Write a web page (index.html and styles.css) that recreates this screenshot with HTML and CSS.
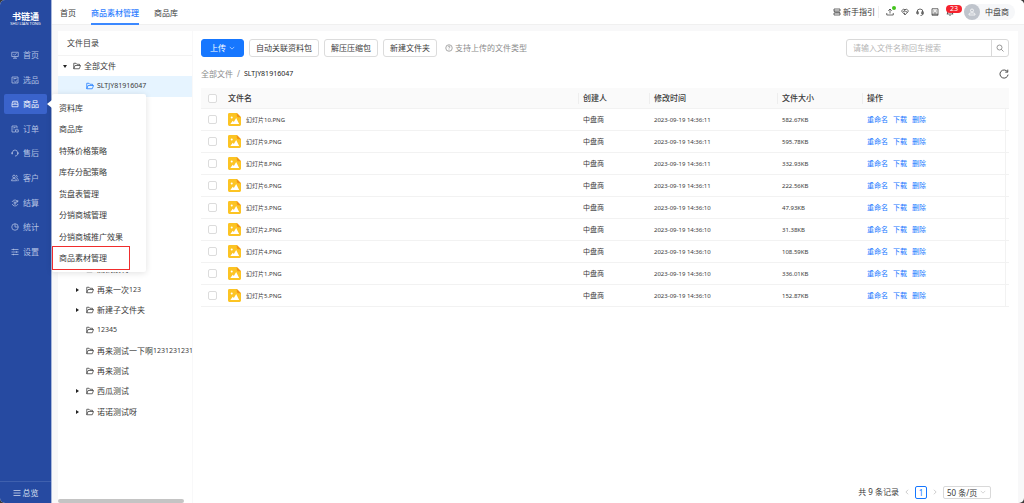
FILE: index.html
```html
<!DOCTYPE html>
<html lang="zh-CN">
<head>
<meta charset="utf-8">
<title>商品素材管理</title>
<link rel="stylesheet" href="styles.css">
</head>
<body>
<svg class="defs" aria-hidden="true">
  <symbol id="folder" viewBox="0 0 16 16"><path d="M1.5 13.5v-11h4.6l1.6 2h5.3v2.5M1.5 13.5l2.6-6.5h11l-2.6 6.5z"/></symbol>
  <symbol id="image" viewBox="0 0 14 14"><path d="M1.5 0H9.500l4.500 4.500v8a1.500 1.500 0 0 1-1.500 1.500h-11a1.500 1.500 0 0 1-1.500-1.500v-11a1.500 1.500 0 0 1 1.500-1.500z" fill="#fcc424"/><path d="M9.500 0l4.500 4.500h-3a1.500 1.500 0 0 1-1.500-1.500z" fill="#f39517"/><circle cx="4" cy="4.800" r="1.100" fill="#fff"/><path d="M2.500 11.800l2.600-3.500 1.200 1.300 2.500-4.300 3.200 6.500z" fill="#fff"/></symbol>
  <symbol id="down" viewBox="0 0 16 16"><path d="M2 5l6 6 6-6"/></symbol>
</svg>
<div class="app">
  <aside class="side">
    <div class="logo"><strong>书链通</strong><small>SHU LIAN TONG</small></div>
    <nav class="side-nav">
      <a href="#"><svg viewBox="0 0 16 16"><path d="M1.500 2.500h13v8.500h-13zM4 14.500h8M8 11v3M5 6.500l2 2 4-4"/></svg>首页</a>
      <a href="#"><svg viewBox="0 0 16 16"><path d="M2 2h12v12H2zM5 5h6M5 8h2M7 11l2 1.500 3-4"/></svg>选品</a>
      <a href="#" class="active"><svg viewBox="0 0 16 16"><path d="M3.500 2.500h9l1.500 5v6H2v-6zM2 8.500h12M5.500 5c.5 2 4.500 2 5 0"/></svg>商品</a>
      <a href="#"><svg viewBox="0 0 16 16"><path d="M8 14H2V2h10v5M5 5h4M5 8h2M9 9.500h5.500V14H9z"/></svg>订单</a>
      <a href="#"><svg viewBox="0 0 16 16"><path d="M3 10V7a5 5 0 0 1 10 0v3c0 3-2 4-5 4M3 7H1.500v3H3M13 7h1.500v3H13"/></svg>售后</a>
      <a href="#"><svg viewBox="0 0 16 16"><circle cx="6" cy="5" r="2.700"/><path d="M1 13.500c0-6 10-6 10 0zM10 2.500c3 0 3 4.500 1 5 2 .5 3.500 3 3.500 6H13"/></svg>客户</a>
      <a href="#"><svg viewBox="0 0 16 16"><path d="M13.500 6A6 6 0 0 0 3 4.500L2 6M2.500 10A6 6 0 0 0 13 11.500l1-1.500M5.500 4.500L8 7.500l2.500-3M5 8h6M8 7.500V12M13.500 2v4H10"/></svg>结算</a>
      <a href="#"><svg viewBox="0 0 16 16"><circle cx="8" cy="8" r="6.500"/><path d="M8 1.500V8h6.500"/></svg>统计</a>
      <a href="#"><svg viewBox="0 0 16 16"><path d="M1 3h14M1 8h14M1 13h14M5 1.500v3M11 6.500v3M5 11.500v3"/></svg>设置</a>
    </nav>
    <a href="#" class="overview"><svg viewBox="0 0 16 16"><path d="M1 3h14M1 8h14M1 13h14"/></svg>总览</a>
  </aside>

  <div class="flyout">
    <a href="#">资料库</a>
    <a href="#">商品库</a>
    <a href="#">特殊价格策略</a>
    <a href="#">库存分配策略</a>
    <a href="#">货盘表管理</a>
    <a href="#">分销商城管理</a>
    <a href="#">分销商城推广效果</a>
    <a href="#" class="marked">商品素材管理</a>
  </div>

  <div class="main">
    <header class="top">
      <nav class="tabs">
        <a href="#">首页</a>
        <a href="#" class="current">商品素材管理</a>
        <a href="#">商品库</a>
      </nav>
      <div class="tools">
        <a href="#" class="guide"><svg viewBox="0 0 16 16"><path d="M2 2h12v4H2zM2 6c0 5 12 0 12 4v4H2v-4h12"/></svg>新手指引</a>
        <button class="tool dot" aria-label="上传"><svg viewBox="0 0 16 16"><path d="M1.500 10v4h13v-4M8 11V2M4.500 5.500L8 2l3.500 3.500"/></svg></button>
        <button class="tool" aria-label="合作"><svg viewBox="0 0 16 16"><path d="M1 6l4-4 3 1.500L11 2l4 4-7 8zM8 3.500L5 7l2 1 2-2 4 3M6 10l2 2"/></svg></button>
        <button class="tool" aria-label="客服"><svg viewBox="0 0 16 16"><path d="M2 11V8a6 6 0 0 1 12 0v3c0 3-2 4-5 4M2 7.500h2.500v4.500H2zM11.500 7.500H14v4.500h-2.500z"/></svg></button>
        <button class="tool" aria-label="帮助"><svg viewBox="0 0 16 16"><path d="M2 1.500h12v13H2zM5.500 5v2M10.500 5v2M5 10h6M2 12.500h12"/></svg></button>
        <button class="tool bell" aria-label="消息"><svg viewBox="0 0 16 16"><path d="M3 12V7a5 5 0 0 1 10 0v5M1.500 12h13M6.500 14.500h3"/></svg><span class="badge">23</span></button>
        <a href="#" class="user"><span class="avatar"><svg viewBox="0 0 16 16"><circle cx="8" cy="5" r="3"/><path d="M2 14v-2c0-3 12-3 12 0v2z"/></svg></span>中盘商</a>
      </div>
    </header>

    <div class="body">
      <section class="dirs">
        <h2>文件目录</h2>
        <ul class="tree">
          <li class="root"><i class="arrow open"></i><svg><use href="#folder"/></svg>全部文件</li>
          <li class="selected"><i class="arrow none"></i><svg><use href="#folder"/></svg><span class="latin">SLTJY81916047</span></li>
          <li class="gap" aria-hidden="true"></li>
          <li><i class="arrow none"></i><svg><use href="#folder"/></svg>测试素材</li>
          <li><i class="arrow"></i><svg><use href="#folder"/></svg>再来一次<span class="latin">123</span></li>
          <li><i class="arrow"></i><svg><use href="#folder"/></svg>新建子文件夹</li>
          <li><i class="arrow none"></i><svg><use href="#folder"/></svg><span class="latin">12345</span></li>
          <li><i class="arrow none"></i><svg><use href="#folder"/></svg>再来测试一下啊<span class="latin">12312312312</span></li>
          <li><i class="arrow none"></i><svg><use href="#folder"/></svg>再来测试</li>
          <li><i class="arrow"></i><svg><use href="#folder"/></svg>西瓜测试</li>
          <li><i class="arrow"></i><svg><use href="#folder"/></svg>诺诺测试呀</li>
        </ul>
        <div class="hbar"></div>
      </section>

      <section class="files">
        <div class="actions">
          <button class="btn primary">上传<svg><use href="#down"/></svg></button>
          <button class="btn">自动关联资料包</button>
          <button class="btn">解压压缩包</button>
          <button class="btn">新建文件夹</button>
          <span class="hint"><svg viewBox="0 0 16 16"><circle cx="8" cy="8" r="6.500"/><path d="M6 6.500c0-3 4-3 4-.5 0 1.500-2 1.500-2 3M8 11v1.300"/></svg>支持上传的文件类型</span>
          <form class="search">
            <input type="text" placeholder="请输入文件名称回车搜索" aria-label="搜索文件">
            <button type="button" aria-label="搜索"><svg viewBox="0 0 16 16"><circle cx="7" cy="7" r="5"/><path d="M10.500 10.500L15 15"/></svg></button>
          </form>
        </div>
        <div class="crumbs">
          <a href="#">全部文件</a><span>/</span><b class="latin">SLTJY81916047</b>
          <button class="reload" aria-label="刷新"><svg viewBox="0 0 16 16"><path d="M13.500 4.500A6.500 6.500 0 1 0 14.500 9M14 1v4h-4"/></svg></button>
        </div>
        <table>
          <colgroup><col class="c-check"><col><col class="c-owner"><col class="c-time"><col class="c-size"><col class="c-ops"></colgroup>
          <thead><tr><th><input type="checkbox" aria-label="全选"></th><th>文件名</th><th class="split">创建人</th><th class="split">修改时间</th><th class="split">文件大小</th><th class="split">操作</th></tr></thead>
          <tbody>
            <tr><td><input type="checkbox" aria-label="幻灯片10"></td><td><div class="file"><svg><use href="#image"/></svg>幻灯片10.PNG</div></td><td>中盘商</td><td class="num">2023-09-19 14:36:11</td><td class="num">582.67KB</td><td class="ops"><a href="#">重命名</a><a href="#">下载</a><a href="#">删除</a></td></tr>
            <tr><td><input type="checkbox" aria-label="幻灯片9"></td><td><div class="file"><svg><use href="#image"/></svg>幻灯片9.PNG</div></td><td>中盘商</td><td class="num">2023-09-19 14:36:11</td><td class="num">595.78KB</td><td class="ops"><a href="#">重命名</a><a href="#">下载</a><a href="#">删除</a></td></tr>
            <tr><td><input type="checkbox" aria-label="幻灯片8"></td><td><div class="file"><svg><use href="#image"/></svg>幻灯片8.PNG</div></td><td>中盘商</td><td class="num">2023-09-19 14:36:11</td><td class="num">332.93KB</td><td class="ops"><a href="#">重命名</a><a href="#">下载</a><a href="#">删除</a></td></tr>
            <tr><td><input type="checkbox" aria-label="幻灯片6"></td><td><div class="file"><svg><use href="#image"/></svg>幻灯片6.PNG</div></td><td>中盘商</td><td class="num">2023-09-19 14:36:11</td><td class="num">222.56KB</td><td class="ops"><a href="#">重命名</a><a href="#">下载</a><a href="#">删除</a></td></tr>
            <tr><td><input type="checkbox" aria-label="幻灯片3"></td><td><div class="file"><svg><use href="#image"/></svg>幻灯片3.PNG</div></td><td>中盘商</td><td class="num">2023-09-19 14:36:10</td><td class="num">47.93KB</td><td class="ops"><a href="#">重命名</a><a href="#">下载</a><a href="#">删除</a></td></tr>
            <tr><td><input type="checkbox" aria-label="幻灯片2"></td><td><div class="file"><svg><use href="#image"/></svg>幻灯片2.PNG</div></td><td>中盘商</td><td class="num">2023-09-19 14:36:10</td><td class="num">31.38KB</td><td class="ops"><a href="#">重命名</a><a href="#">下载</a><a href="#">删除</a></td></tr>
            <tr><td><input type="checkbox" aria-label="幻灯片4"></td><td><div class="file"><svg><use href="#image"/></svg>幻灯片4.PNG</div></td><td>中盘商</td><td class="num">2023-09-19 14:36:10</td><td class="num">108.59KB</td><td class="ops"><a href="#">重命名</a><a href="#">下载</a><a href="#">删除</a></td></tr>
            <tr><td><input type="checkbox" aria-label="幻灯片1"></td><td><div class="file"><svg><use href="#image"/></svg>幻灯片1.PNG</div></td><td>中盘商</td><td class="num">2023-09-19 14:36:10</td><td class="num">336.01KB</td><td class="ops"><a href="#">重命名</a><a href="#">下载</a><a href="#">删除</a></td></tr>
            <tr><td><input type="checkbox" aria-label="幻灯片5"></td><td><div class="file"><svg><use href="#image"/></svg>幻灯片5.PNG</div></td><td>中盘商</td><td class="num">2023-09-19 14:36:10</td><td class="num">152.87KB</td><td class="ops"><a href="#">重命名</a><a href="#">下载</a><a href="#">删除</a></td></tr>
          </tbody>
        </table>
        <footer class="pager">
          <span>共 9 条记录</span>
          <button class="step" aria-label="上一页"><svg viewBox="0 0 16 16"><path d="M11 2L5 8l6 6"/></svg></button>
          <button class="page">1</button>
          <button class="step" aria-label="下一页"><svg viewBox="0 0 16 16"><path d="M5 2l6 6-6 6"/></svg></button>
          <label class="size"><select aria-label="每页条数"><option>50 条/页</option></select><svg><use href="#down"/></svg></label>
        </footer>
      </section>
    </div>
  </div>
</div>
</body>
</html>
```
FILE: styles.css
```css
* { box-sizing: border-box; }
body {
  margin: 0;
  background: #3a3a3a;
  color: #3a3a3a;
  font: 8px/12px "Noto Sans", "Noto Sans CJK SC", sans-serif;
}
a { color: inherit; text-decoration: none; }
button, input, select { font: inherit; color: inherit; margin: 0; padding: 0; }
button { border: 0; background: none; }
svg { width: 8px; height: 8px; flex: none; fill: none; stroke: currentColor; stroke-width: 1.5; }
.defs { position: absolute; width: 0; height: 0; }
.latin { font-size: 7px; font-weight: 400; }

.app {
  position: relative;
  display: flex;
  height: 100vh;
  border-radius: 5px;
  overflow: hidden;
  background: #f8f8f9;
}

/* Sidebar */
.side {
  width: 52px;
  flex: none;
  display: flex;
  flex-direction: column;
  background: #264aa1;
  border-right: 1px solid #a9b8dc;
  color: #b3c1e3;
}
.logo {
  height: 43px;
  padding-top: 11px;
  display: flex;
  flex-direction: column;
  align-items: center;
  color: #fff;
}
.logo strong { font-size: 9px; line-height: 11px; font-weight: 700; }
.logo small { font-size: 4px; line-height: 4px; }
.side-nav { display: grid; grid-auto-rows: 1fr; height: 221px; padding: 0 4px; }
.side-nav a { display: flex; align-items: center; gap: 4px; padding-left: 7px; border-radius: 2px; }
.side-nav .active { background: #3a63cb; color: #fff; align-self: center; height: 20px; }
.overview {
  display: flex;
  align-items: center;
  justify-content: center;
  gap: 2px;
  height: 22px;
  margin-top: auto;
  border-top: 1px solid #3f60ae;
  color: #dbe2f2;
}

/* Second-level menu floating over the page */
.flyout {
  position: absolute;
  z-index: 2;
  left: 52px;
  top: 94px;
  width: 94px;
  height: 178px;
  padding: 3px 0;
  display: flex;
  flex-direction: column;
  background: #fff;
  border-radius: 2px;
  box-shadow: 0 1px 6px rgba(0, 0, 0, .12);
}
.flyout::before {
  content: "";
  position: absolute;
  left: -5px;
  top: 6px;
  border: solid transparent;
  border-width: 4px 5px 4px 0;
  border-right-color: #fff;
}
.flyout a { flex: 1; display: flex; align-items: center; padding-left: 7px; }
.flyout .marked { position: relative; }
.marked::after {
  content: "";
  position: absolute;
  inset: -2px 16px -1px 0;
  border: 1px solid #f02d2d;
}

/* Header */
.main { flex: 1; min-width: 0; display: flex; flex-direction: column; }
.top {
  height: 25px;
  flex: none;
  display: flex;
  justify-content: space-between;
  padding: 0 9px 0 8px;
  background: #fff;
  border-bottom: 1px solid #f0f0f0;
}
.tabs { display: flex; gap: 15px; }
.tabs a { height: 25px; line-height: 25px; }
.tabs .current { color: #2f80ff; border-bottom: 2px solid #3b88ff; font-weight: 500; }
.tools { display: flex; align-items: center; gap: 7px; }
.tool { position: relative; display: flex; }
.guide { display: flex; align-items: center; gap: 2px; padding-right: 3px; border-right: 1px solid #eee; }
.dot::after {
  content: "";
  position: absolute;
  right: -2px;
  top: -2px;
  width: 4px;
  height: 4px;
  border-radius: 50%;
  background: #43c41c;
}
.badge {
  position: absolute;
  left: 0;
  bottom: 3px;
  width: 16px;
  height: 8px;
  border-radius: 4px;
  background: #f5222d;
  color: #fff;
  font-size: 7px;
  line-height: 8px;
  text-align: center;
}
.user {
  display: flex;
  align-items: center;
  gap: 5px;
  height: 16px;
  padding-right: 6px;
  margin-left: 3px;
  border-radius: 8px;
  background: #f6f7f9;
}
.avatar {
  display: grid;
  place-items: center;
  width: 16px;
  height: 16px;
  border-radius: 50%;
  background: #bfc4cc;
  color: #fff;
}

/* Body */
.body { flex: 1; min-height: 0; display: flex; gap: 1px; padding: 6px 6px 0 6px; }
.dirs { width: 134px; flex: none; display: flex; flex-direction: column; background: #fff; overflow: hidden; }
.dirs h2 { margin: 0; padding: 0 9px; font-size: 8px; line-height: 24px; font-weight: 400; border-bottom: 1px solid #f3f3f3; }
.tree {
  flex: none;
  list-style: none;
  margin: 0;
  padding: 0;
  height: 366px;
  display: grid;
  grid-template-rows: repeat(18, 1fr);
}
.tree li { display: flex; align-items: center; padding-left: 15px; white-space: nowrap; }
.tree svg { margin-right: 3px; }
.tree .root { padding-left: 2px; }
.tree .selected { background: #e6f4ff; }
.tree .selected svg { color: #1677ff; }
.tree .gap { grid-row: span 8; }
.arrow { width: 9px; height: 8px; margin-right: 4px; display: grid; place-items: center; }
.arrow::before { content: ""; border: solid transparent; border-width: 2px 0 2px 3px; border-left-color: #222; }
.arrow.open::before { border-width: 3px 2px 0 2px; border-color: #222 transparent transparent; }
.arrow.none::before { display: none; }
.hbar { width: 126px; height: 4px; margin-top: auto; border-radius: 2px; background: #c4c4c4; }

.files { flex: 1; min-width: 0; display: flex; flex-direction: column; padding: 8px 9px 4px 8px; background: #fff; }
.actions { display: flex; gap: 5px; height: 18px; }
.btn {
  padding: 0 6px;
  border: 1px solid #dcdcdc;
  border-radius: 3px;
  background: #fff;
  line-height: 16px;
  white-space: nowrap;
}
.btn.primary {
  display: flex;
  align-items: center;
  gap: 3px;
  padding: 0 8px;
  border-color: #1677ff;
  background: #1677ff;
  color: #fff;
}
.primary svg { width: 6px; height: 6px; }
.hint { display: flex; align-items: center; gap: 2px; padding-left: 3px; color: #8c8c8c; }
.search { display: flex; width: 163px; margin-left: auto; border: 1px solid #d9d9d9; border-radius: 3px; }
.search input { flex: 1; min-width: 0; padding-left: 6px; border: 0; background: none; outline: 0; }
.search ::placeholder { color: #b5b5b5; opacity: 1; }
.search button { display: grid; place-items: center; width: 17px; border-left: 1px solid #d9d9d9; color: #777; }
.crumbs { display: flex; align-items: center; gap: 4px; height: 12px; margin: 11px 0 8px; color: #8c8c8c; }
.crumbs b { color: #222; }
.reload { display: flex; margin-left: auto; color: #444; }
.reload svg { width: 10px; height: 10px; }

table { width: 100%; table-layout: fixed; border-collapse: separate; border-spacing: 0; font-size: 7px; }
.c-check { width: 22px; }
.c-owner { width: 71px; }
.c-time { width: 128px; }
.c-size { width: 85px; }
.c-ops { width: 147px; }
th, td { padding: 0 0 0 5px; text-align: left; border-bottom: 1px solid #f2f2f2; }
th { height: 21px; background: #fafafa; font-size: 8px; font-weight: 500; }
td { height: 22px; }
th:first-child, td:first-child { padding-left: 7px; }
.split { background: linear-gradient(#eee, #eee) 0 50% / 1px 11px no-repeat #fafafa; }
.num, .file { font-size: 6px; }
.file { display: flex; align-items: center; gap: 5px; }
.file svg { width: 13px; height: 13px; stroke: none; }
.ops { background: linear-gradient(#f2f2f2, #f2f2f2) calc(100% - 3px) 0 / 1px 100% no-repeat; color: #1677ff; }
.ops a { margin-right: 5px; }
input[type="checkbox"] {
  display: block;
  appearance: none;
  width: 9px;
  height: 9px;
  border: 1px solid #dcdcdc;
  border-radius: 2px;
  background: #fff;
}

.pager { display: flex; align-items: center; justify-content: flex-end; gap: 5px; height: 14px; margin-top: auto; padding-right: 18px; }
.step { display: flex; color: #aaa; }
.step svg { width: 6px; height: 6px; }
.page { width: 12px; height: 13px; border: 1px solid #1677ff; border-radius: 2px; color: #1677ff; line-height: 11px; }
.size { position: relative; display: flex; align-items: center; }
.size select { width: 48px; height: 13px; padding-left: 3px; appearance: none; border: 1px solid #d9d9d9; border-radius: 2px; background: #fff; }
.size svg { position: absolute; right: 5px; width: 6px; height: 6px; color: #b5b5b5; pointer-events: none; }
```
